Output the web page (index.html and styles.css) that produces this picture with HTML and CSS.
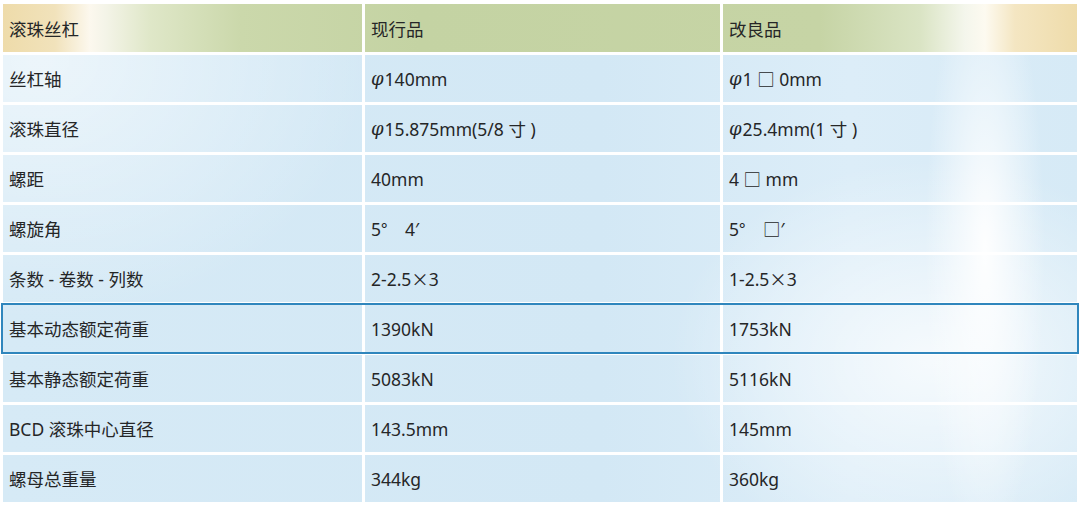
FILE: index.html
```html
<!DOCTYPE html>
<html lang="zh-CN">
<head>
<meta charset="utf-8">
<title>滚珠丝杠 对比</title>
<link rel="stylesheet" href="styles.css">
</head>
<body>
<div class="table">
  <div class="row head">
    <div class="cell">滚珠丝杠</div>
    <div class="cell">现行品</div>
    <div class="cell">改良品</div>
  </div>
  <div class="row">
    <div class="cell">丝杠轴</div>
    <div class="cell"><i class="phi">φ</i>140mm</div>
    <div class="cell"><i class="phi">φ</i>1 □ 0mm</div>
  </div>
  <div class="row">
    <div class="cell">滚珠直径</div>
    <div class="cell"><i class="phi">φ</i>15.875mm(5/8 寸 )</div>
    <div class="cell"><i class="phi">φ</i>25.4mm(1 寸 )</div>
  </div>
  <div class="row">
    <div class="cell">螺距</div>
    <div class="cell">40mm</div>
    <div class="cell">4 □ mm</div>
  </div>
  <div class="row">
    <div class="cell">螺旋角</div>
    <div class="cell">5<span class="cjk">°</span>　4′</div>
    <div class="cell">5<span class="cjk">°</span>　□′</div>
  </div>
  <div class="row">
    <div class="cell">条数 - 卷数 - 列数</div>
    <div class="cell">2-2.5<span class="cjk">×</span>3</div>
    <div class="cell">1-2.5<span class="cjk">×</span>3</div>
  </div>
  <div class="row selected">
    <div class="cell">基本动态额定荷重</div>
    <div class="cell">1390kN</div>
    <div class="cell">1753kN</div>
  </div>
  <div class="row">
    <div class="cell">基本静态额定荷重</div>
    <div class="cell">5083kN</div>
    <div class="cell">5116kN</div>
  </div>
  <div class="row">
    <div class="cell">BCD 滚珠中心直径</div>
    <div class="cell">143.5mm</div>
    <div class="cell">145mm</div>
  </div>
  <div class="row">
    <div class="cell">螺母总重量</div>
    <div class="cell">344kg</div>
    <div class="cell">360kg</div>
  </div>
</div>
</body>
</html>
```

FILE: styles.css
```css
html, body {
  margin: 0;
  padding: 0;
  background: #ffffff;
}

body {
  width: 1080px;
  height: 506px;
  overflow: hidden;
  font-family: "Noto Sans", "Noto Sans CJK SC", sans-serif;
  font-size: 17.5px;
  color: #252627;
}

.table {
  display: flex;
  flex-direction: column;
  gap: 3px;
  padding: 4px 3px 0 3px;
}

.row {
  display: grid;
  grid-template-columns: 359px 355px 354px;
  column-gap: 3px;
  height: 47px;
}

.row.head {
  height: 48px;
}

.row.selected {
  outline: 2px solid #2f86bd;
  outline-offset: 0px;
  position: relative;
}

.cell {
  display: flex;
  align-items: center;
  padding-left: 6px;
  white-space: pre;
  background-attachment: fixed;
  background-image:
    radial-gradient(ellipse 60px 300px at 985px 250px, rgba(255,255,255,0.95), rgba(255,255,255,0) 100%),
    radial-gradient(ellipse 260px 200px at 930px 360px, rgba(255,255,255,0.75), rgba(255,255,255,0) 100%),
    radial-gradient(ellipse 330px 260px at 40px 60px, rgba(255,255,255,0.55), rgba(255,255,255,0) 100%),
    linear-gradient(90deg, #d6eaf6 0px, #d3e8f5 600px, #dcedf8 850px, #d6eaf6 1080px);
}

.head .cell {
  background-image:
    linear-gradient(90deg,
      #eedba9 0px,
      #f1e2bb 55px,
      #fcf8ee 90px,
      #f4f4e8 105px,
      #dfe7c8 150px,
      #cbd8ab 240px,
      #c4d3a3 420px,
      #c6d4a5 820px,
      #dae4c4 920px,
      #f4f6ec 965px,
      #fdfaf0 985px,
      #f4e6c2 1015px,
      #eedba9 1080px);
}

.phi {
  font-family: "DejaVu Serif", "Liberation Serif", serif;
  font-style: italic;
  font-size: 18px;
  margin-right: 1px;
}

.cjk {
  font-family: "Noto Sans CJK SC", sans-serif;
}
```
